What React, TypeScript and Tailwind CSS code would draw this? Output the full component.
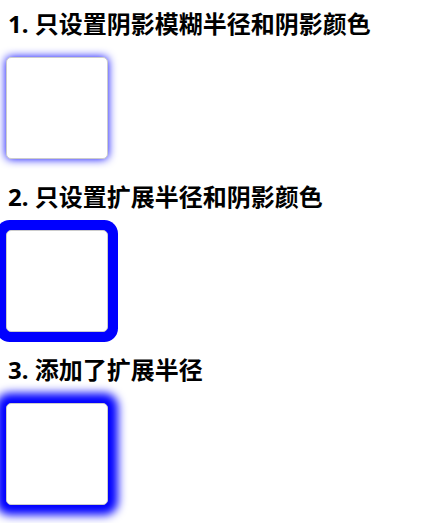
const items = [
  { title: "1. 只设置阴影模糊半径和阴影颜色", shadow: "shadow-[0_0_10px_#0000ff]" },
  { title: "2. 只设置扩展半径和阴影颜色", shadow: "shadow-[0_0_0_10px_#0000ff]" },
  { title: "3. 添加了扩展半径", shadow: "shadow-[0_0_10px_10px_#0000ff]" },
];

export default function App() {
  return (
    <div className="w-[441px] h-[523px] bg-white text-black overflow-hidden pt-[6px] font-['Noto_Sans','Noto_Sans_CJK_SC',sans-serif]">
      {items.map((item, i) => (
        <div key={i} className={i === 0 ? "" : "mt-[20px]"}>
          <h2 className="ml-2 text-[24px] leading-[36px] font-bold">{item.title}</h2>
          {/* box with border + shadow */}
          <div
            className={`ml-[6px] mt-[15px] w-[102px] h-[102px] border border-[#cccccc] rounded-[5px] bg-white ${item.shadow}`}
          />
        </div>
      ))}
    </div>
  );
}
